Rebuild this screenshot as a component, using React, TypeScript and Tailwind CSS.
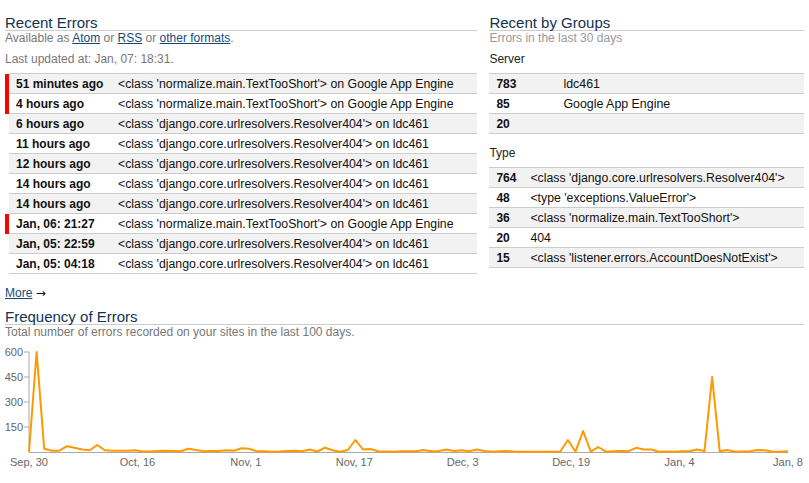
import React from 'react';

const errors = [
  { when: '51 minutes ago', what: "<class 'normalize.main.TextTooShort'> on Google App Engine", flag: true },
  { when: '4 hours ago', what: "<class 'normalize.main.TextTooShort'> on Google App Engine", flag: true },
  { when: '6 hours ago', what: "<class 'django.core.urlresolvers.Resolver404'> on ldc461", flag: false },
  { when: '11 hours ago', what: "<class 'django.core.urlresolvers.Resolver404'> on ldc461", flag: false },
  { when: '12 hours ago', what: "<class 'django.core.urlresolvers.Resolver404'> on ldc461", flag: false },
  { when: '14 hours ago', what: "<class 'django.core.urlresolvers.Resolver404'> on ldc461", flag: false },
  { when: '14 hours ago', what: "<class 'django.core.urlresolvers.Resolver404'> on ldc461", flag: false },
  { when: 'Jan, 06: 21:27', what: "<class 'normalize.main.TextTooShort'> on Google App Engine", flag: true },
  { when: 'Jan, 05: 22:59', what: "<class 'django.core.urlresolvers.Resolver404'> on ldc461", flag: false },
  { when: 'Jan, 05: 04:18', what: "<class 'django.core.urlresolvers.Resolver404'> on ldc461", flag: false },
];

const servers = [
  { count: '783', name: 'ldc461' },
  { count: '85', name: 'Google App Engine' },
  { count: '20', name: '' },
];

const types = [
  { count: '764', name: "<class 'django.core.urlresolvers.Resolver404'>" },
  { count: '48', name: "<type 'exceptions.ValueError'>" },
  { count: '36', name: "<class 'normalize.main.TextTooShort'>" },
  { count: '20', name: '404' },
  { count: '15', name: "<class 'listener.errors.AccountDoesNotExist'>" },
];

// one value per day, Sep 30 .. Jan 8
const daily = [
  0, 600, 20, 8, 8, 35, 25, 15, 10, 42,
  10, 8, 8, 8, 10, 3, 3, 6, 8, 6,
  4, 20, 12, 4, 6, 6, 10, 8, 22, 20,
  5, 5, 1, 3, 6, 8, 4, 15, 3, 26,
  10, 2, 12, 72, 15, 18, 5, 3, 2, 4,
  5, 5, 12, 4, 6, 15, 6, 10, 4, 15,
  6, 1, 5, 6, 2, 2, 2, 2, 2, 2,
  3, 72, 2, 126, 2, 30, 2, 5, 6, 5,
  25, 15, 15, 2, 3, 1, 5, 5, 15, 6,
  450, 5, 12, 2, 3, 4, 12, 10, 1, 1,
  5,
];

const xLabels = ['Sep, 30', 'Oct, 16', 'Nov, 1', 'Nov, 17', 'Dec, 3', 'Dec, 19', 'Jan, 4', 'Jan, 8'];

const Heading: React.FC<{ children: React.ReactNode }> = ({ children }) => (
  <h2 className="text-[15px] leading-[14px] h-[15px] text-[#123150] border-b border-[#cccccc]">{children}</h2>
);

const FrequencyChart: React.FC = () => {
  const left = 24;
  const right = 783;
  const base = 110;
  const step = (right - left) / (daily.length - 1);
  const points = daily
    .map((v, i) => `${(left + i * step).toFixed(1)},${(base - (v / 600) * 100).toFixed(1)}`)
    .join(' ');
  const labelStep = (right - left) / (xLabels.length - 1);

  return (
    <svg width="800" height="135" className="block mt-[3px]" fontFamily="'Liberation Sans', Arial, sans-serif">
      <line x1={left} y1={10} x2={left} y2={base} stroke="#aaaaaa" strokeWidth="1" />
      <line x1={left} y1={base + 0.5} x2={right} y2={base + 0.5} stroke="#aaaaaa" strokeWidth="1" />
      {[600, 450, 300, 150].map((v) => {
        const y = base - (v / 600) * 100;
        return (
          <g key={v}>
            <line x1={left - 5} y1={y} x2={left} y2={y} stroke="#aaaaaa" strokeWidth="1" />
            <text x={left - 6} y={y + 4} textAnchor="end" fontSize="11" fill="#666666">{v}</text>
          </g>
        );
      })}
      <polyline points={points} fill="none" stroke="#ff9900" strokeWidth="2" strokeLinejoin="round" />
      {xLabels.map((l, k) => (
        <text key={l} x={left + k * labelStep} y={124} textAnchor="middle" fontSize="11" fill="#666666">{l}</text>
      ))}
    </svg>
  );
};

const App: React.FC = () => {
  return (
    <div className="w-[809px] h-[483px] overflow-hidden bg-white px-[5px] pt-[16px] text-[12px] leading-[14px] text-[#111111] font-['Liberation_Sans',Arial,sans-serif]">
      <div className="flex gap-[12px]">
        {/* Recent errors */}
        <div className="w-[473px]">
          <Heading>Recent Errors</Heading>
          <p className="text-[#777777]">
            Available as <a href="#" className="text-[#134a7c] underline">Atom</a> or{' '}
            <a href="#" className="text-[#134a7c] underline">RSS</a> or{' '}
            <a href="#" className="text-[#134a7c] underline">other formats</a>.
          </p>
          <p className="mt-[7px] text-[#777777]">Last updated at: Jan, 07: 18:31.</p>
          <div className="mt-[7px]">
            <div className="ml-[4px] border-t border-[#cccccc]" />
            {errors.map((e, i) => (
              <div key={i} className="flex">
                <div className={`w-[4px] ${e.flag ? 'bg-[#ff0000]' : ''}`} />
                <div className={`flex-1 flex items-center h-[20px] border-b border-[#cccccc] ${i % 2 === 0 ? 'bg-[#f2f2f2]' : 'bg-white'}`}>
                  <span className="w-[109px] pl-[7px] font-bold">{e.when}</span>
                  <span className="text-[12.3px]">{e.what}</span>
                </div>
              </div>
            ))}
          </div>
        </div>

        {/* Recent by groups */}
        <div className="w-[315px]">
          <Heading>Recent by Groups</Heading>
          <p className="text-[#999999]">Errors in the last 30 days</p>
          <p className="mt-[7px] text-[#222222]">Server</p>
          <div className="mt-[7px] border-t border-[#cccccc]">
            {servers.map((s, i) => (
              <div key={i} className={`flex items-center h-[20px] border-b border-[#cccccc] ${i % 2 === 0 ? 'bg-[#f2f2f2]' : 'bg-white'}`}>
                <span className="w-[74px] pl-[7px] font-bold">{s.count}</span>
                <span className="text-[12.4px]">{s.name}</span>
              </div>
            ))}
          </div>
          <p className="mt-[12px] text-[#222222]">Type</p>
          <div className="mt-[7px] border-t border-[#cccccc]">
            {types.map((t, i) => (
              <div key={i} className={`flex items-center h-[20px] border-b border-[#cccccc] ${i % 2 === 0 ? 'bg-[#f2f2f2]' : 'bg-white'}`}>
                <span className="w-[41px] pl-[7px] font-bold">{t.count}</span>
                <span className="text-[12.3px]">{t.name}</span>
              </div>
            ))}
          </div>
        </div>
      </div>

      <p className="mt-[12px]">
        <a href="#" className="text-[#134a7c] underline">More</a>{' '}
        <span className="font-['DejaVu_Sans',sans-serif] text-[12px]">→</span>
      </p>

      {/* Frequency */}
      <div className="mt-[10px]">
        <Heading>Frequency of Errors</Heading>
        <p className="text-[#777777]">Total number of errors recorded on your sites in the last 100 days.</p>
        <FrequencyChart />
      </div>
    </div>
  );
};

export default App;
